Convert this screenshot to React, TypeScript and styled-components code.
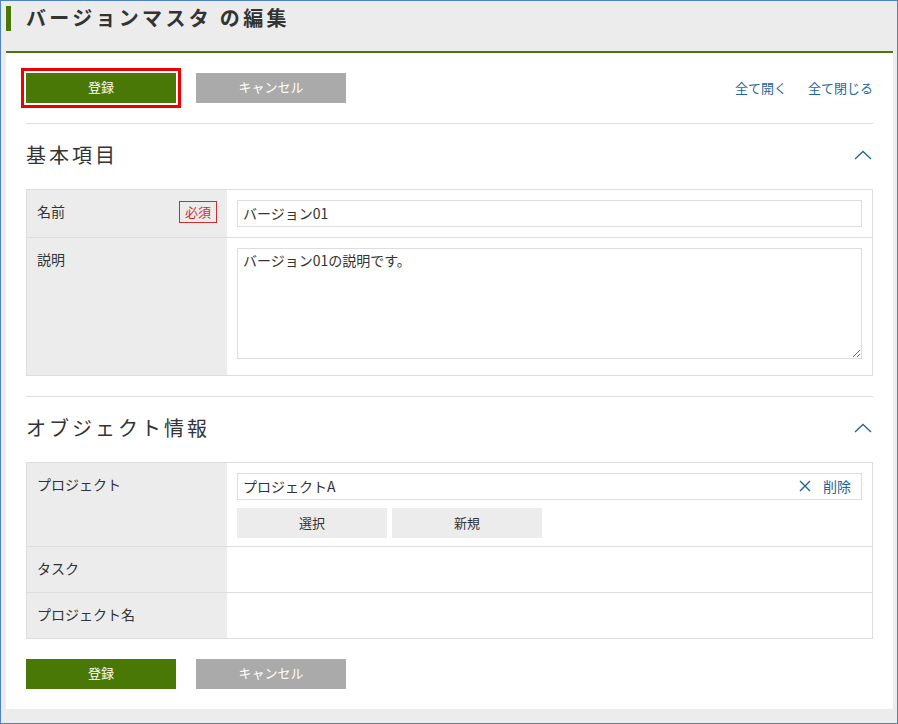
import React from 'react';
import styled, { createGlobalStyle } from 'styled-components';

const GlobalStyle = createGlobalStyle`
  html, body {
    margin: 0;
    padding: 0;
    background: #fff;
  }
  body {
    font-family: "Noto Sans CJK JP", "Noto Sans", sans-serif;
    color: #333;
  }
  * { box-sizing: border-box; }
`;

const green = '#4a7806';
const link = '#1f6699';

const Frame = styled.div`
  width: 898px;
  height: 724px;
  border: 1px solid #4f83c4;
  background: #ececec;
  padding: 0 4px 14px 5px;
`;

const Header = styled.div`
  height: 50px;
  padding-top: 5px;
`;

const Title = styled.h1`
  margin: 0;
  border-left: 5px solid ${green};
  padding-left: 15px;
  height: 25px;
  line-height: 24px;
  font-size: 20px;
  font-weight: bold;
  letter-spacing: 3.3px;
  color: #333;
`;

const Panel = styled.div`
  background: #fff;
  border-top: 2px solid ${green};
  padding: 20px 20px 20px;
`;

const ButtonRow = styled.div`
  display: flex;
  align-items: center;
  gap: 20px;
`;

const ActionButton = styled.button<{ $variant: 'primary' | 'cancel'; $focused?: boolean }>`
  width: 150px;
  height: 30px;
  border: none;
  padding: 0 0 2px;
  font-family: inherit;
  font-size: 13px;
  line-height: 28px;
  color: #fff;
  background: ${({ $variant }) => ($variant === 'primary' ? green : '#aaaaaa')};
  outline: ${({ $focused }) => ($focused ? '3px solid #ee0000' : 'none')};
  outline-offset: 2px;
  cursor: pointer;
`;

const Links = styled.div`
  margin-left: auto;
  display: flex;
  gap: 21px;
`;

const TextLink = styled.a`
  font-size: 13px;
  line-height: 20px;
  color: ${link};
  text-decoration: none;
  cursor: pointer;
`;

const Divider = styled.hr`
  margin: 20px 0 0;
  border: none;
  border-top: 1px solid #dddddd;
`;

const SectionHead = styled.div`
  display: flex;
  align-items: center;
  justify-content: space-between;
  padding: 16px 0 19px;
`;

const SectionTitle = styled.h2`
  margin: 0;
  font-size: 20px;
  font-weight: normal;
  line-height: 30px;
  letter-spacing: 3px;
  color: #333;
`;

const Chevron = styled.svg`
  width: 18px;
  height: 10px;
  margin-right: 1px;
  display: block;
`;

const Table = styled.div`
  border: 1px solid #dddddd;
`;

const Row = styled.div`
  display: flex;
  & + & {
    border-top: 1px solid #dddddd;
  }
`;

const Label = styled.div`
  width: 200px;
  flex: none;
  background: #ececec;
  padding: 11px 10px 14px;
  display: flex;
  justify-content: space-between;
  align-items: flex-start;
  font-size: 14px;
  line-height: 20px;
`;

const Required = styled.span`
  border: 1px solid #c9302c;
  color: #c9302c;
  font-size: 13px;
  line-height: 20px;
  padding: 0 5px;
`;

const Value = styled.div<{ $pb?: number }>`
  flex: 1;
  padding: 10px 10px ${({ $pb }) => ($pb ?? 10)}px;
`;

const TextInput = styled.input`
  display: block;
  width: 100%;
  height: 27px;
  border: 1px solid #dddddd;
  padding: 0 5px 1px;
  font-family: inherit;
  font-size: 14px;
  color: #333;
  outline: none;
`;

const TextArea = styled.textarea`
  display: block;
  width: 100%;
  height: 111px;
  border: 1px solid #dddddd;
  padding: 1px 5px;
  font-family: inherit;
  font-size: 14px;
  line-height: 20px;
  color: #333;
  outline: none;
  margin-bottom: 6px;
`;

const RefBox = styled.div`
  display: flex;
  align-items: center;
  height: 27px;
  border: 1px solid #dddddd;
  padding: 0 10px 1px 5px;
  font-size: 14px;
  line-height: 20px;
`;

const RefText = styled.span`
  flex: 1;
`;

const Remove = styled.a`
  display: flex;
  align-items: center;
  gap: 12px;
  color: ${link};
  font-size: 14px;
  cursor: pointer;
`;

const SubButtons = styled.div`
  display: flex;
  gap: 5px;
  margin-top: 8px;
`;

const SubButton = styled.button`
  width: 150px;
  height: 30px;
  border: none;
  padding: 0 0 2px;
  background: #ececec;
  font-family: inherit;
  font-size: 13px;
  color: #333;
  cursor: pointer;
`;

const BottomRow = styled(ButtonRow)`
  margin-top: 20px;
`;

const Up = () => (
  <Chevron viewBox="0 0 18 10">
    <polyline points="1,9 9,1.5 17,9" fill="none" stroke={link} strokeWidth="1.3" />
  </Chevron>
);

const XIcon = () => (
  <svg width="12" height="12" viewBox="0 0 12 12">
    <path d="M1 1 L11 11 M11 1 L1 11" stroke={link} strokeWidth="1.4" fill="none" />
  </svg>
);

export default function App() {
  return (
    <>
      <GlobalStyle />
      <Frame>
        <Header>
          <Title>バージョンマスタ の編集</Title>
        </Header>
        <Panel>
          <ButtonRow>
            <ActionButton $variant="primary" $focused>登録</ActionButton>
            <ActionButton $variant="cancel">キャンセル</ActionButton>
            <Links>
              <TextLink>全て開く</TextLink>
              <TextLink>全て閉じる</TextLink>
            </Links>
          </ButtonRow>
          <Divider />

          <SectionHead>
            <SectionTitle>基本項目</SectionTitle>
            <Up />
          </SectionHead>
          <Table>
            <Row>
              <Label>
                名前
                <Required>必須</Required>
              </Label>
              <Value>
                <TextInput defaultValue="バージョン01" />
              </Value>
            </Row>
            <Row>
              <Label>説明</Label>
              <Value>
                <TextArea defaultValue="バージョン01の説明です。" />
              </Value>
            </Row>
          </Table>
          <Divider />

          <SectionHead>
            <SectionTitle>オブジェクト情報</SectionTitle>
            <Up />
          </SectionHead>
          <Table>
            <Row>
              <Label>プロジェクト</Label>
              <Value $pb={8}>
                <RefBox>
                  <RefText>プロジェクトA</RefText>
                  <Remove>
                    <XIcon />
                    削除
                  </Remove>
                </RefBox>
                <SubButtons>
                  <SubButton>選択</SubButton>
                  <SubButton>新規</SubButton>
                </SubButtons>
              </Value>
            </Row>
            <Row>
              <Label>タスク</Label>
              <Value />
            </Row>
            <Row>
              <Label>プロジェクト名</Label>
              <Value />
            </Row>
          </Table>

          <BottomRow>
            <ActionButton $variant="primary">登録</ActionButton>
            <ActionButton $variant="cancel">キャンセル</ActionButton>
          </BottomRow>
        </Panel>
      </Frame>
    </>
  );
}
